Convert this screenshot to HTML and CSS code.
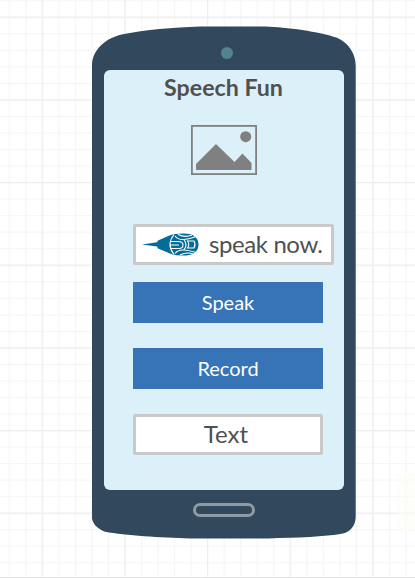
FILE: index.html
```html
<!DOCTYPE html>
<html lang="en">
<head>
<meta charset="utf-8">
<title>Speech Fun</title>
<link rel="stylesheet" href="styles.css">
</head>
<body>
<main class="canvas">
  <svg class="grid" width="415" height="579" aria-hidden="true">
    <defs>
      <pattern id="minor" width="16.53" height="16.53" x="8.7" y="0.2" patternUnits="userSpaceOnUse">
        <path d="M.6 0V16.53M0 .6H16.53" fill="none" stroke="#f5f5f5" stroke-width="1.2"/>
      </pattern>
      <pattern id="major" width="82.65" height="82.65" x="41.7" y="16.7" patternUnits="userSpaceOnUse">
        <path d="M.6 0V82.65M0 .6H82.65" fill="none" stroke="#eeeeee" stroke-width="1.2"/>
      </pattern>
    </defs>
    <rect width="415" height="577" fill="url(#minor)"/>
    <rect width="415" height="577" fill="url(#major)"/>
    <rect x="397.5" y="474" width="18" height="58" fill="#fbfbf3" opacity=".5"/>
    <path d="M0 577.5H415" stroke="#e4e4e4"/>
  </svg>
  <section class="phone">
    <svg class="shell" width="264" height="513" viewBox="92 26 264 513" aria-hidden="true">
      <path fill="#32485d" d="M91.8 66C92 59 94 54 97 50C103 42 111 37 123 34.3C145 29.5 173 27.5 200 26.4H266C285 27 320 31.5 337 37.7C349 43 355.7 54 355.7 66V517C355.5 526 350 532 343 533.5C325 537 297 537.5 268 538.4H190C160 537.5 126 535.5 105 531.7C96 528 92 523 91.8 516Z"/>
    </svg>
    <header class="top"><span class="camera"></span></header>
    <div class="screen">
      <h1 class="title">Speech Fun</h1>
      <svg class="picture" width="66" height="50" viewBox="0 0 66 50" aria-hidden="true">
        <rect x=".9" y=".9" width="64.2" height="48.2" fill="none" stroke="#808080" stroke-width="1.8"/>
        <circle cx="54.7" cy="11.7" r="5.5" fill="#808080"/>
        <path d="M5 45V39L25 19L43.5 37L51.5 28.5L60.5 38V45Z" fill="#808080"/>
      </svg>
      <div class="prompt">
        <svg class="mic" width="57" height="23" viewBox="0 0 57 23" aria-hidden="true">
          <path fill="#056b98" d="M0 11.6L15 9.2L16 7.6L28 2.2Q33 .3 42 .4C52 .5 56.5 5 56.5 11.4S52 22.5 42 22.5Q33 22.7 28 20.4L16 15.6L15 13.4Z"/>
          <g fill="none" stroke="#fff" stroke-width="1.1">
            <path d="M32 1.5Q24 11.5 32 21.5M28 8.5H36Q41 8.5 41 12T37 15.5H29M28 12H37M33 3Q36 7 42 6.5T54 3.5M36 1.5Q43 5 50 2M33 20.5Q36 16.5 42 17T54 19.5M38 22Q45 18.5 51 21M42 6.8Q46 11.5 42 16.8"/>
            <path d="M45.5 8H52Q54 11.5 52 15H45.5Q48 11.5 45.5 8Z"/>
          </g>
        </svg>
        <span class="speak-text">speak now.</span>
      </div>
      <button class="action" type="button"><span class="speak-label">Speak</span></button>
      <button class="action record" type="button"><span class="record-label">Record</span></button>
      <div class="field">Text</div>
    </div>
    <footer class="bottom"><span class="home"></span></footer>
  </section>
</main>
</body>
</html>
```
FILE: styles.css
```css
* { box-sizing: border-box; }
body {
  margin: 0;
  background: #fff;
  font-family: Lato, sans-serif;
  color: #505050;
}
.canvas {
  position: relative;
  width: 415px;
  height: 579px;
  padding: 26px 0 0 92px;
  overflow: hidden;
}
.grid { position: absolute; inset: 0; }
.phone {
  position: relative;
  display: flex;
  flex-direction: column;
  width: 264px;
  height: 513px;
}
.shell { position: absolute; inset: 0; }
.top { position: relative; height: 43.6px; padding: 21px 0 0 128.6px; }
.camera {
  display: block;
  width: 12px;
  height: 12px;
  border-radius: 50%;
  background: #52838e;
}
.screen {
  position: relative;
  display: flex;
  flex-direction: column;
  align-items: flex-start;
  width: 240.5px;
  height: 420.2px;
  margin-left: 11.5px;
  padding-left: 29.5px;
  border-radius: 6px;
  background: #dcf0f9;
}
.title {
  width: 181px;
  margin: 0;
  padding-top: 3.4px;
  height: 55.4px;
  font-size: 23.2px;
  line-height: 28px;
  font-weight: 700;
  text-align: center;
  white-space: nowrap;
}
.picture { margin-left: 58px; }
.prompt, .field {
  border: 3px solid #c9c9c9;
  border-radius: 2px;
  background: #fff;
  height: 41px;
  font-size: 24px;
  line-height: 33px;
  white-space: nowrap;
}
.prompt {
  display: flex;
  align-items: center;
  gap: 10px;
  width: 201px;
  margin-top: 49px;
  padding-left: 6px;
}
.speak-text { padding-bottom: 2px; letter-spacing: -.4px; }
.action {
  width: 190px;
  height: 41px;
  margin-top: 17px;
  padding: 0;
  border: 0;
  background: #3673b7;
  color: #fff;
  font: 20px/41px Lato, sans-serif;
  text-align: center;
}
.record { margin-top: 25px; }
.field { width: 190px; margin-top: 25px; padding-right: 4px; text-align: center; }
.bottom { position: relative; padding: 13.5px 0 0 101px; }
.home {
  display: block;
  width: 62px;
  height: 13.5px;
  border: 3px solid #8f9aa5;
  border-radius: 7px;
}
```
